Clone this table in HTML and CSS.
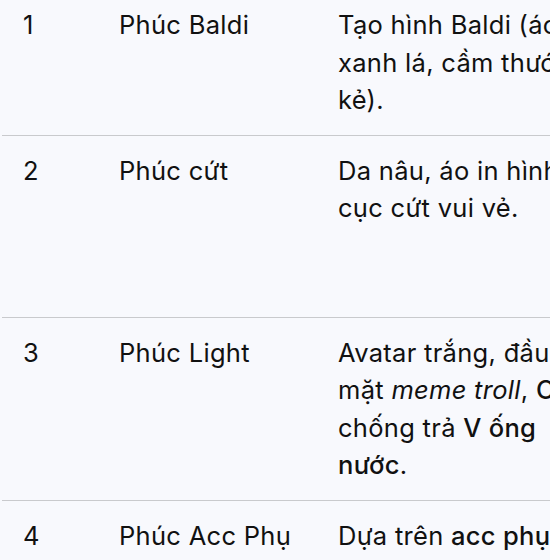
FILE: index.html
```html
<!DOCTYPE html>
<html lang="vi">
<head>
<meta charset="utf-8">
<link rel="stylesheet" href="styles.css">
</head>
<body>
<div class="page">
  <div class="scroller">
    <div class="table">
      <div class="row r1">
        <div class="cell num">1</div>
        <div class="cell name">Phúc Baldi</div>
        <div class="cell desc">Tạo hình Baldi (áo<br>xanh lá, cầm thước<br>kẻ).</div>
      </div>
      <div class="row r2">
        <div class="cell num">2</div>
        <div class="cell name">Phúc cứt</div>
        <div class="cell desc">Da nâu, áo in hình<br>cục cứt vui vẻ.</div>
      </div>
      <div class="row r3">
        <div class="cell num">3</div>
        <div class="cell name">Phúc Light</div>
        <div class="cell desc">Avatar trắng, đầu<br>mặt <em>meme troll</em>, <b>C</b><br>chống trả <b>V ống</b><br><b>nước</b>.</div>
      </div>
      <div class="row r4">
        <div class="cell num">4</div>
        <div class="cell name">Phúc Acc Phụ</div>
        <div class="cell desc">Dựa trên <b>acc phụ</b></div>
      </div>
    </div>
  </div>
</div>
</body>
</html>
```

FILE: styles.css
```css
html, body {
  margin: 0;
  padding: 0;
  background: #ffffff;
}
body {
  font-family: Inter, Roboto, "Noto Sans", sans-serif;
  color: #111111;
  width: 560px;
  height: 560px;
  overflow: hidden;
}
.page {
  width: 560px;
  height: 560px;
  background: #ffffff;
}
.scroller {
  width: 550px;
  height: 560px;
  overflow: hidden;
  background: #f8f9fd;
}
.table {
  margin-top: -10px;
  margin-left: 2px;
  width: 700px;
}
.row {
  display: grid;
  grid-template-columns: 96px 219px 1fr;
  padding: 16px 0 16px 21px;
  border-bottom: 1.5px solid #c9cacd;
  font-size: 25.5px;
  font-weight: 400;
  line-height: 37.5px;
  letter-spacing: 0.3px;
  box-sizing: border-box;
}
.r2 { height: 182px; }
.cell {
  white-space: nowrap;
}
.desc b {
  font-weight: 500;
}
.desc em {
  font-style: italic;
}
```
